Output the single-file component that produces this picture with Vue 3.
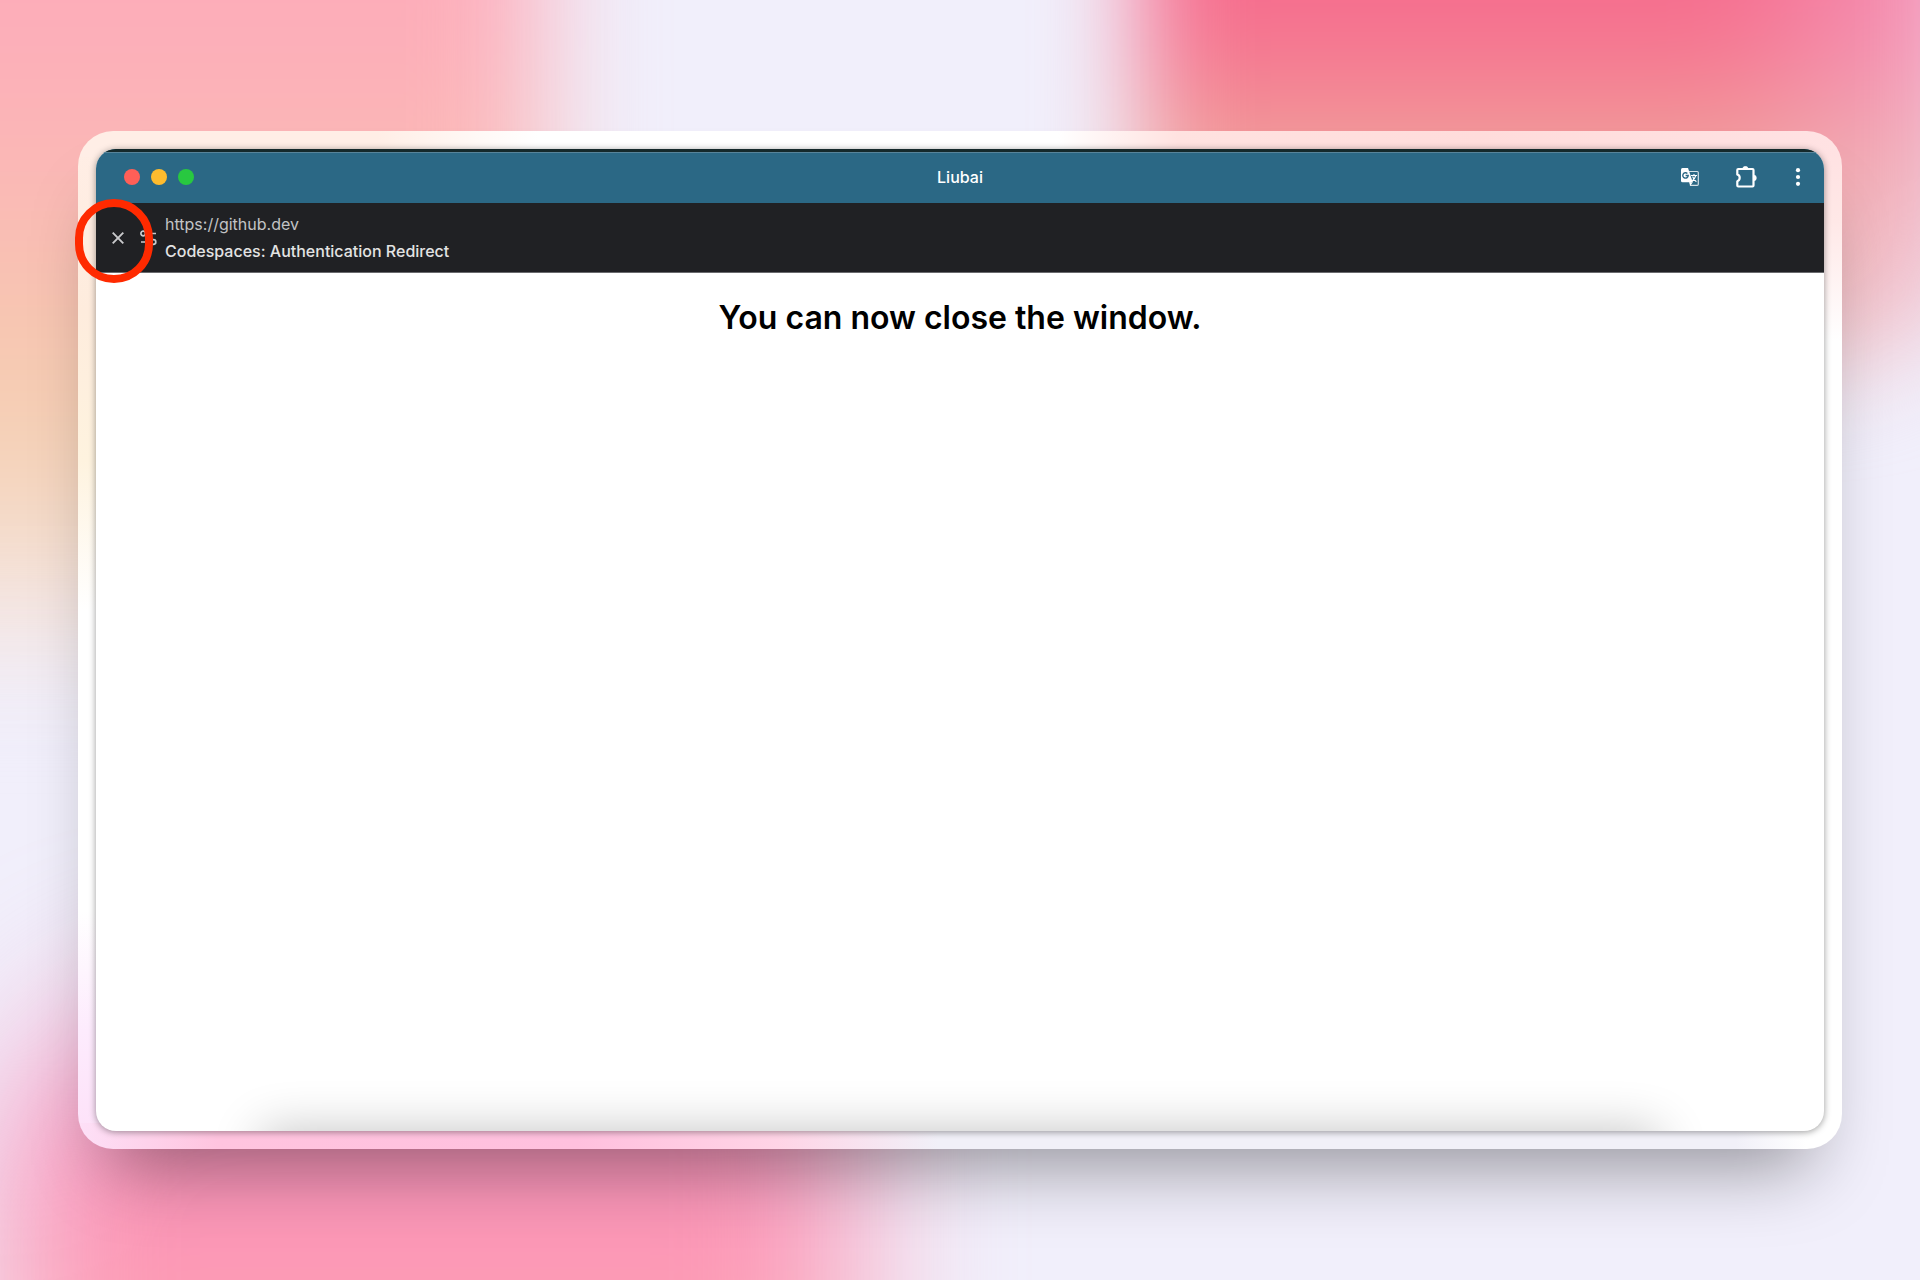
<script setup>
const lights = ['red', 'yellow', 'green']
</script>

<template>
  <div class="desktop">
    <div class="wallpaper" aria-hidden="true">
      <div class="blob peach"></div>
      <div class="blob rose"></div>
      <div class="blob pink"></div>
    </div>

    <div class="frame">
      <main class="window">
        <header class="titlebar">
          <div class="lights">
            <button v-for="c in lights" :key="c" class="light" :class="c" :aria-label="c"></button>
          </div>
          <div class="title">Liubai</div>
          <div class="tools">
            <button class="tool" aria-label="Translate">
              <svg width="18" height="20" viewBox="0 0 18 20">
                <path d="M7 4.500H16.200Q17.300 4.500 17.300 5.600V17.200Q17.300 18.300 16.200 18.300H9.500Z" fill="none" stroke="#d5e1e7" stroke-width="1.200" />
                <path d="M1.500 1H7L11.800 15.300H1.500Q0 15.300 0 13.800V2.500Q0 1 1.500 1Z" fill="#fff" />
                <path d="M8.300 15.300H11.800L9.500 18.600Z" fill="#fff" />
                <path d="M6.400 6.500A2.700 2.700 0 1 0 7.200 8.500H4.600" fill="none" stroke="#2b6885" stroke-width="1.400" />
                <path d="M10 8.500H16M13 7V8.500M14.800 8.500Q13.900 12 10.800 14.500M11.600 9.500Q12.800 12.800 15.400 14.800" fill="none" stroke="#fff" stroke-width="1.100" />
              </svg>
            </button>
            <button class="tool" aria-label="Extensions">
              <svg width="22" height="22" viewBox="0 0 22 22">
                <path d="M1.300 4Q1.300 3 2.300 3H16.500Q17.500 3 17.500 4V19.500Q17.500 20.500 16.500 20.500H2.300Q1.300 20.500 1.300 19.500V15.200Q3.700 14.400 3.700 11.800Q3.700 9.200 1.300 8.400Z" fill="none" stroke="#fff" stroke-width="2.200" stroke-linejoin="round" />
                <path d="M6.700 3A2.700 2.700 0 0 1 12.100 3ZM17.500 9A2.900 2.900 0 0 1 17.500 14.800Z" fill="#fff" stroke="#fff" stroke-width=".5" />
              </svg>
            </button>
            <button class="tool" aria-label="More">
              <svg width="6" height="20" viewBox="0 0 6 20" fill="#fff">
                <circle cx="3" cy="3.200" r="2.100" /><circle cx="3" cy="10" r="2.100" /><circle cx="3" cy="16.800" r="2.100" />
              </svg>
            </button>
          </div>
        </header>

        <div class="sitebar">
          <button class="close" aria-label="Close">
            <svg width="12" height="12" viewBox="0 0 12 12"><path d="M.7.7L11.300 11.300M11.300.7L.7 11.300" stroke="#c9cacc" stroke-width="1.900" /></svg>
          </button>
          <button class="tune" aria-label="Site information">
            <svg width="17" height="16" viewBox="0 0 17 16" fill="none" stroke="#c9cacc" stroke-width="1.700">
              <circle cx="3.200" cy="3.500" r="2.300" /><path d="M8 3.500H16M1 12H9" /><circle cx="13.500" cy="12" r="2.300" />
            </svg>
          </button>
          <div class="site">
            <div class="url">https://github.dev</div>
            <div class="name">Codespaces: Authentication Redirect</div>
          </div>
        </div>

        <section class="page">
          <h1>You can now close the window.</h1>
        </section>
      </main>
      <div class="ring" aria-hidden="true"></div>
    </div>
  </div>
</template>

<style>
body {
  margin: 0;
}
</style>

<style scoped>
.desktop {
  position: relative;
  isolation: isolate;
  box-sizing: border-box;
  min-height: 100vh;
  padding: 131px 78px;
  display: flex;
  overflow: hidden;
  background: #f1effb;
  font-family: Inter, "Liberation Sans", sans-serif;
}
.wallpaper {
  position: absolute;
  inset: 0;
  z-index: -1;
  overflow: hidden;
}
.blob {
  position: absolute;
}
.peach {
  left: -240px;
  top: -240px;
  width: 780px;
  height: 900px;
  filter: blur(56px);
  border-bottom-right-radius: 400px;
  background: linear-gradient(#fdacba 240px, #fbb8b6 410px, #f7c7b1 570px, #f5d2b6 690px, #f4e4de 840px, #f2eaf0);
}
.rose {
  left: 1140px;
  right: -50px;
  top: -240px;
  height: 610px;
  filter: blur(48px);
  border-bottom-right-radius: 140px;
  background:
    linear-gradient(90deg, transparent 580px, rgba(241, 200, 240, 0.5)),
    linear-gradient(#f66b8d 240px, #f38896 340px, #f09c96 390px, #f2b2ae 470px, #efc8c2);
}
.pink {
  left: 0;
  bottom: -260px;
  width: 850px;
  height: 550px;
  filter: blur(76px);
  border-top-left-radius: 200px;
  background: linear-gradient(#f3a0cc, #fb8eb4 210px, #fd9fb5 290px);
}
.frame {
  position: relative;
  flex: 1;
  min-width: 0;
  padding: 18px;
  display: flex;
  border-radius: 35px;
  background:
    linear-gradient(90deg, #ffeee6 300px, #fff 460px, #fff 980px, #ffe2e0 1100px, #ffdcdb 1400px, #ffe2e3) top / 100% 26px no-repeat,
    linear-gradient(90deg, #fde0f7, #ffc4df 140px, #ffc0de 500px, #ffd4e6 700px, #f1f0f8 860px, #f1f0f8 94%, #fff 98%) bottom / 100% 26px no-repeat,
    linear-gradient(#ffeee6, #feecdd 180px, #fef3df 330px, #fff 480px, #fff 780px, #fdebfd 900px, #fde0f8) left / 26px 100% no-repeat,
    linear-gradient(#ffe0e1, #ffe8e7 90px, #fff 210px) right / 26px 100% no-repeat,
    #fff;
  box-shadow: 0 48px 76px -32px rgba(0, 0, 0, 0.4);
}
.window {
  flex: 1;
  min-width: 0;
  display: flex;
  flex-direction: column;
  overflow: hidden;
  border-radius: 20px;
  background: #fff;
  box-shadow: 0 1px 7px rgba(0, 0, 0, 0.4);
}
button {
  display: flex;
  align-items: center;
  justify-content: center;
  padding: 0;
  border: 0;
  background: none;
}
.titlebar {
  box-sizing: border-box;
  height: 54px;
  padding: 0 23px 1px;
  display: grid;
  grid-template-columns: 1fr auto 1fr;
  align-items: center;
  border-top: 3px solid #15292b;
  box-shadow: inset 0 1px #57849a;
  background: #2b6885;
}
.lights {
  padding-left: 5px;
  display: flex;
  gap: 11px;
}
.light {
  width: 16px;
  height: 16px;
  border-radius: 50%;
}
.red { background: #ff5f57; }
.yellow { background: #febc2e; }
.green { background: #28c840; }
.title {
  font-size: 16px;
  line-height: 20px;
  font-weight: 500;
  color: #fff;
}
.tools {
  display: flex;
  justify-content: flex-end;
  align-items: center;
  gap: 37px;
}
.sitebar {
  box-sizing: border-box;
  height: 70px;
  padding-left: 16px;
  display: flex;
  align-items: center;
  border-bottom: 1px solid #6a6b6e;
  background: #202124;
}
.tune {
  margin: 0 8px 0 16px;
}
.site {
  font-size: 16px;
  line-height: 27px;
}
.url {
  color: #c2c3c5;
}
.name {
  font-weight: 500;
  color: #e3e3e3;
}
.page {
  flex: 1;
  display: flex;
  flex-direction: column;
  align-items: center;
  justify-content: space-between;
}
.page::after {
  content: "";
  align-self: stretch;
  height: 60px;
  margin: 0 166px -60px;
  box-shadow: 0 0 50px rgba(0, 0, 0, 0.24);
}
h1 {
  margin: 25px 0 0;
  font-size: 32px;
  line-height: 40px;
  font-weight: 600;
  color: #000;
}
.ring {
  position: absolute;
  left: -3px;
  top: 68px;
  box-sizing: border-box;
  width: 78px;
  height: 84px;
  border: 8px solid #ff2a00;
  border-radius: 39px;
}
</style>
